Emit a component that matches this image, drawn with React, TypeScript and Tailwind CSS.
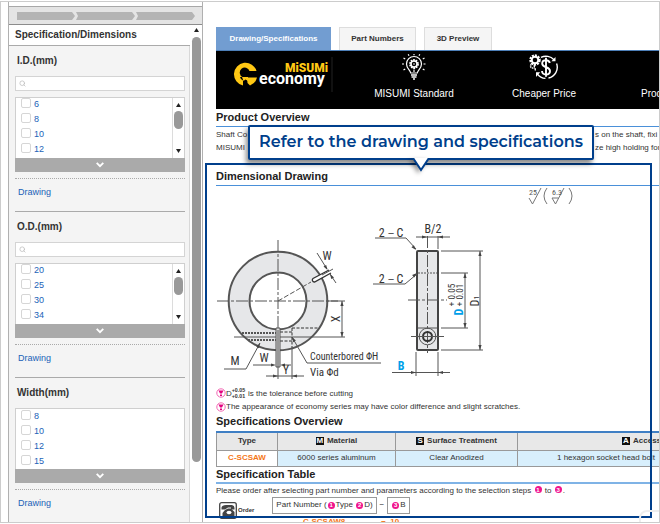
import React from "react";
import { Search } from "lucide-react";

type Filter = { id: string; title: string; values: string[]; searchable: boolean };

const filters: Filter[] = [
  { id: "inner", title: "I.D.(mm)", values: ["6", "8", "10", "12"], searchable: true },
  { id: "outer", title: "O.D.(mm)", values: ["20", "25", "30", "34"], searchable: true },
  { id: "width", title: "Width(mm)", values: ["8", "10", "12", "15"], searchable: false },
];

function StepBar() {
  return (
    <div className="flex h-[18px] items-center justify-center border-b border-[#8c8c8c] bg-[#e4e4e4]">
      <svg width="178" height="8" viewBox="0 0 178 8" fill="#b4b4b4">
        <path d="M0 0H55L58 4L55 8H0Z" />
        <path d="M59 0H115L118 4L115 8H59L61 4Z" />
        <path d="M119 0H175L178 4L175 8H119L121 4Z" />
      </svg>
    </div>
  );
}

function Triangle({ up = false }: { up?: boolean }) {
  return (
    <svg width="5" height="4" viewBox="0 0 5 4" fill="#222">
      <path d={up ? "M0 4L2.5 0L5 4Z" : "M0 0L2.5 4L5 0Z"} />
    </svg>
  );
}

function FilterGroup({ filter }: { filter: Filter }) {
  return (
    <section className="border-b border-[#aaa] last:border-b-0">
      <h3 className="flex h-[30px] items-center pb-[2px] pl-[2px] text-[10px] font-bold text-[#333]">{filter.title}</h3>
      {filter.searchable && (
        <label className="mb-[6px] flex h-[15px] items-center border border-[#d4d4d4] bg-white pl-[3px]">
          <Search className="size-[7px] shrink-0 text-[#bbb]" strokeWidth={2.5} />
          <input aria-label={filter.title} className="h-full w-full min-w-0 px-1 text-[10px] outline-none" />
        </label>
      )}
      <div className="flex h-[61px] overflow-hidden border border-b-0 border-[#cfcfcf] bg-white">
        <ul className={filter.searchable ? "flex-1" : "flex-1 pt-px"}>
          {filter.values.map((v) => (
            <li key={v} className="h-[15px] pl-[5px]">
              <label className="flex items-start gap-[3px] text-[9px] leading-[12px] text-[#2262b8]">
                <input type="checkbox" className="size-[10px] shrink-0 appearance-none rounded-[2px] border border-[#d6d6d6] bg-white" />
                {v}
              </label>
            </li>
          ))}
        </ul>
        {filter.searchable && (
          <div className="flex w-3 flex-col items-center border-l border-[#dcdcdc] py-[5px]">
            <Triangle up />
            <span className="mt-1 h-[18px] w-[9px] rounded-full bg-[#999]" />
            <span className="mt-auto flex"><Triangle /></span>
          </div>
        )}
      </div>
      <button aria-label={"Show more " + filter.title} className="flex h-[14px] w-full items-center justify-center bg-[#aaa]">
        <svg width="8" height="6" viewBox="0 0 8 6" fill="none" stroke="#fff" strokeWidth="1.8">
          <path d="M0.7 0.8L4 4.2L7.3 0.8" />
        </svg>
      </button>
      <div className="mt-[6px] h-[33px] border-t border-dotted border-[#aaa] pt-[7px] pl-[3px]">
        <a href="#drawing" className="block text-[9px] leading-[12px] text-[#2262b8]">Drawing</a>
      </div>
    </section>
  );
}

function Sidebar() {
  return (
    <aside className="ml-[7px] flex w-[195px] shrink-0 flex-col border-x border-[#b0b0b0] pt-1">
      <div className="border-t border-[#a8a8a8]"><StepBar /></div>
      <div className="flex min-h-0 flex-1">
        <div className="flex flex-1 flex-col">
          <h2 className="flex h-[21px] items-center border-b border-[#aaa] pb-[2px] pl-[6px] text-[10px] font-bold text-[#333]">
            Specification/Dimensions
          </h2>
          <div className="flex-1 border-r border-[#d8d8d8] bg-[#f4f4f4] pr-1 pl-[6px]">
            {filters.map((f) => <FilterGroup key={f.id} filter={f} />)}
          </div>
        </div>
        <div className="flex w-3 flex-col items-center pt-[3px]">
          <Triangle up />
          <span className="mt-[5px] h-[425px] w-[9px] rounded-full bg-[#999]" />
        </div>
      </div>
    </aside>
  );
}

function EconomyLogo() {
  return (
    <svg width="118" height="58" viewBox="216 51 118 58">
      {/* ring with an open right side, closed below by the hand */}
      <path d="M256.500 71A11.500 11.500 0 1 0 243 85.500V80.500Q240.500 79.500 240 77H242.500A5 5 0 1 1 249.500 71Z" fill="#ffc814" />
      <path d="M247 77.500H257Q255.500 83.500 250 85.500L247.500 83Z" fill="#ffc814" />
      <path d="M242 77H248V81L245.500 79.500L243.500 81Z" fill="#ffc814" />
      <text x="285" y="72" fill="#ffc814" fontSize="12" fontWeight="900" fontFamily="Roboto, sans-serif">MiSUMi</text>
      <text x="259" y="84" fill="#fff" fontSize="16" fontWeight="700" fontFamily="Roboto, sans-serif">economy</text>
      <path d="M332 57V92" stroke="#222" />
    </svg>
  );
}

function BulbIcon() {
  return (
    <svg width="26" height="26" viewBox="0 0 26 26" fill="none" stroke="#fff" strokeWidth="1.2">
      <path d="M9.7 19C9.5 16.5 5.5 14.5 5.5 10A7.5 7.5 0 0 1 20.5 10C20.5 14.5 16.5 16.5 16.3 19Z" />
      <path d="M10 21H16M10.5 23H15.5M12 25H14" strokeWidth="1.3" />
      <circle cx="13" cy="10" r="4" strokeWidth="1.8" strokeDasharray="1.7 .8" />
      <circle cx="13" cy="10" r="3" strokeWidth="1.5" />
      <circle cx="13" cy="10" r=".8" fill="#fff" stroke="none" />
      <path d="M13 13.5V18M1 10H3.5M22.5 10H25M2.5 4L4.7 5.3M23.5 4L21.3 5.3M2.5 16L4.7 14.7M23.5 16L21.3 14.7M7.2 .3L8 1.8M18.8 .3L18 1.8M13 0V1.3" strokeDasharray="2 .6" />
    </svg>
  );
}

function PriceIcon() {
  return (
    <svg width="30" height="26" viewBox="0 0 30 26" fill="none" stroke="#fff">
      <path d="M12 3.4A11 11 0 0 1 25 5.8M27.6 9.5A11 11 0 0 1 19.5 24M16.5 24.4A11 11 0 0 1 8.3 19.8M6.4 16.5L6 14" strokeWidth="1.4" />
      <path d="M26.5 3V7.2H22.4ZM7 23V18.2H11.2Z" fill="#fff" stroke="none" />
      <circle cx="6" cy="6" r="4.6" strokeWidth="2.2" strokeDasharray="2 1" />
      <circle cx="6" cy="6" r="3.3" strokeWidth="2" />
      <circle cx="3.5" cy="12" r="2" strokeWidth="1.5" strokeDasharray="1.4 .6" />
      <path d="M20.8 9C20.4 7 19 6.2 17 6.2C14.8 6.2 13.2 7.5 13.2 9.5C13.2 14.5 21 12 21 17C21 19.2 19.3 20.5 17 20.5C14.8 20.5 13.2 19.3 13 17M17 3.8V22.8" strokeWidth="1.9" />
    </svg>
  );
}

function Arrow({ x, y, a }: { x: number; y: number; a: number }) {
  return <path d="M0 0L-5 -1.6V1.6Z" fill="#444" stroke="none" transform={`translate(${x} ${y}) rotate(${a})`} />;
}

function DimensionalDrawing() {
  return (
    <svg width="444" height="200" viewBox="216 186 444 200" fill="none" stroke="#555" strokeWidth="1"
      className="block font-['Roboto_Condensed',Roboto,sans-serif] text-[12px]">
      {/* surface finish marks */}
      <g stroke="#777">
        <path d="M529 198L532.5 204L541 188M547 188Q541 196 547 204M552 198L555.5 204L564 188M552 198H558.5M569 188Q575 196 569 204" />
        <g fill="#555" stroke="none" fontSize="8"><text x="529" y="195">25</text><text x="552" y="195">6.3</text></g>
      </g>
      {/* ring */}
      <circle cx="278" cy="301" r="39" stroke="#e6e7e9" strokeWidth="20" />
      <circle cx="278" cy="301" r="49.3" stroke="#555" strokeWidth="2" />
      <circle cx="278" cy="301" r="28.5" stroke="#555" strokeWidth="2" />
      <path d="M278 240V330M217 301H338" strokeDasharray="12 2 3 2" />
      <path d="M278 301L311 282" strokeDasharray="5 2" />
      <path d="M329 270L313 278.5A2 2 0 0 0 314.5 282L331 273" fill="#fff" stroke="#333" strokeWidth="1.3" />
      <path d="M317 253L327 269M330 274L336 283M322 275L333 269" />
      <Arrow x={327.5} y={270} a={58} /><Arrow x={330} y={274} a={238} />
      <path d="M326 301H345M234 337H345M342 301V337" />
      <Arrow x={342} y={301} a={-90} /><Arrow x={342} y={337} a={90} />
      <path d="M242 333H276M248 340H276" strokeWidth="2" strokeDasharray="2 1" />
      <path d="M280 332H292M280 341H292M292 328H319M292 328V348" stroke="#333" strokeDasharray="3 1.5" />
      <path d="M276 328H280V367H276Z" fill="#ddd" />
      <path d="M278 330V379M292 348V379M266 376H304M253 365H271M283 365H291" />
      <Arrow x={276} y={365} a={0} /><Arrow x={280} y={365} a={180} />
      <Arrow x={278} y={376} a={0} /><Arrow x={292} y={376} a={180} />
      <path d="M224 369H246L260 343M381 363H307L292 337" />
      <Arrow x={260} y={343} a={-61} /><Arrow x={292} y={337} a={-120} />
      {/* side view */}
      <rect x="417" y="251" width="21" height="99" rx="1" fill="#e6e7e9" stroke="#444" strokeWidth="2" />
      <path d="M418 273H437" strokeDasharray="2 1" /><path d="M418 328H437" />
      <path d="M427.5 236V353M408 300H447" strokeDasharray="12 2 3 2" />
      <circle cx="427.5" cy="336.500" r="8.3" /><circle cx="427.5" cy="336.500" r="4.5" stroke="#333" strokeWidth="2" />
      <path d="M411 336.500H444M438 236V249M416 237H450" />
      <Arrow x={427} y={237} a={0} /><Arrow x={438} y={237} a={180} />
      <path d="M375 238H406L416 249M373 284H405L417 274" />
      <Arrow x={416} y={250} a={48} /><Arrow x={417} y={273} a={-40} />
      <path d="M441 251H483M441 273H468M441 328H468M441 350H483M465 273V328M480 251V350" />
      <Arrow x={465} y={273} a={-90} /><Arrow x={465} y={328} a={90} />
      <Arrow x={480} y={251} a={-90} /><Arrow x={480} y={350} a={90} />
      <path d="M416 352V376M438 352V376M392 372.500H450" />
      <Arrow x={416} y={372.5} a={0} /><Arrow x={438} y={372.5} a={180} />
      {/* labels */}
      <g fill="#333" stroke="none" textAnchor="middle">
        <text x="327" y="260">W</text>
        <text transform="translate(340 319) rotate(-90)">X</text>
        <text x="235" y="365">M</text>
        <text x="264" y="362">W</text>
        <text x="286" y="374">Y</text>
        <text x="310" y="360" textAnchor="start" fontSize="10">Counterbored ΦH</text>
        <text x="310" y="376" textAnchor="start" fontSize="11">Via Φd</text>
        <text x="433" y="233">B/2</text>
        <text x="391" y="237">2－C</text>
        <text x="391" y="283">2－C</text>
        <text transform="translate(479 301) rotate(-90)">D<tspan fontSize="8">1</tspan></text>
        <text transform="translate(455 295) rotate(-90)" fontSize="9">+ 0.05</text>
        <text transform="translate(463 295) rotate(-90)" fontSize="9">+ 0.01</text>
        <text transform="translate(463 312) rotate(-90)" fontWeight="700" fill="#00a0e9">D</text>
        <text x="401" y="370" fontWeight="700" fill="#00a0e9">B</text>
      </g>
    </svg>
  );
}

function NoteIcon() {
  return (
    <svg width="10" height="10" viewBox="0 0 10 10" className="shrink-0">
      <circle cx="5" cy="5" r="4.2" fill="#fff" stroke="#f268b4" />
      <path d="M2.5 2.5H7.500L6 5.500H4ZM4 6.500H6V8H4Z" fill="#e4007f" />
    </svg>
  );
}

function Num({ n }: { n: number }) {
  return <b className="mx-px inline-flex size-[7px] items-center justify-center rounded-full bg-[#f0148c] align-[1px] text-[6px] leading-none text-white">{n}</b>;
}

function Badge({ c }: { c: string }) {
  return <span className="mr-[3px] inline-block size-2 bg-[#111] text-center text-[8px] leading-[8px] text-white">{c}</span>;
}

function SectionTitle({ children }: { children: React.ReactNode }) {
  return <h2 className="flex h-[18px] items-center border-b border-[#4a90d9] text-[11px] font-bold text-[#222]">{children}</h2>;
}

export default function App() {
  const th = "border border-[#999] p-0 font-bold";
  const td = "border border-[#999] p-0";
  return (
    <div className="h-screen bg-white py-px font-['Liberation_Sans',Arial,sans-serif] text-[#333]">
      <div className="relative flex h-full overflow-hidden border border-[#ccc]">
        <Sidebar />
        <main className="min-w-0 flex-1 overflow-hidden pt-[25px] pl-[13px] text-[8px] whitespace-nowrap">
          <nav className="flex gap-2 border-b border-[#4d7fb8] text-[8px] font-bold">
            <button className="h-[23px] w-[115px] bg-[#729dd1] text-white">Drawing/Specifications</button>
            <button className="h-[23px] w-[77px] border border-b-0 border-[#ddd] bg-[#f5f5f5]">Part Numbers</button>
            <button className="h-[23px] w-[68px] border border-b-0 border-[#ddd] bg-[#f5f5f5]">3D Preview</button>
          </nav>
          <div className="flex h-[58px] bg-black text-[10px] text-white">
            <div className="w-[133px] shrink-0"><EconomyLogo /></div>
            <div className="flex w-[130px] shrink-0 flex-col items-center gap-2 pt-[3px] leading-[12px]"><BulbIcon />MISUMI Standard</div>
            <div className="flex w-[130px] shrink-0 flex-col items-center gap-2 pt-[3px] leading-[12px]"><PriceIcon />Cheaper Price</div>
            <div className="shrink-0 pt-[37px] pl-8 leading-[12px]">Prod</div>
          </div>
          <SectionTitle>Product Overview</SectionTitle>
          <div className="h-[41px] pt-px leading-[13px]">
            <p className="flex"><span className="w-[379px] shrink-0">Shaft Co</span>s on the shaft, fixi</p>
            <p className="flex"><span className="w-[379px] shrink-0">MISUMI</span>ze high holding for</p>
          </div>
          <SectionTitle>Dimensional Drawing</SectionTitle>
          <DimensionalDrawing />
          <div className="leading-[13px]">
            <p className="flex h-[14px] items-center"><NoteIcon />D
              <span className="mr-[3px] flex flex-col text-[7px] leading-[6px] font-bold"><sup className="static leading-[6px]">+0.05</sup><sub className="static leading-[6px]">+0.01</sub></span>
              is the tolerance before cutting</p>
            <p className="flex h-[13px] items-center"><NoteIcon />The appearance of economy series may have color difference and slight scratches.</p>
          </div>
          <h2 className="flex h-[18px] items-center pb-px text-[11px] font-bold text-[#222]">Specifications Overview</h2>
          <table className="w-[700px] table-fixed border-collapse border-t-2 border-[#3f7fc4] text-center">
            <thead>
              <tr className="h-[18px] bg-[#e8e8e8]">
                <th className={th + " w-[61px]"}>Type</th>
                <th className={th + " w-[118px]"}><Badge c="M" />Material</th>
                <th className={th + " w-[122px]"}><Badge c="S" />Surface Treatment</th>
                <th className={th + " pl-[104px] text-left"}><Badge c="A" />Access</th>
              </tr>
            </thead>
            <tbody>
              <tr className="h-[16px] bg-[#d8effc]">
                <td className={td + " bg-white font-bold text-[#f57716]"}>C-SCSAW</td>
                <td className={td}>6000 series aluminum</td>
                <td className={td}>Clear Anodized</td>
                <td className={td + " pl-[39px] text-left"}>1 hexagon socket head bolt</td>
              </tr>
            </tbody>
          </table>
          <h2 className="flex h-[17px] items-center border-b-2 border-[#7fb3e6] text-[11px] font-bold text-[#222]">Specification Table</h2>
          <p className="h-[13px] leading-[13px]">Please order after selecting part number and parameters according to the selection steps <Num n={1} /> to <Num n={3} />.</p>
          <div className="flex h-[17px] items-center pl-[3px]">
            <svg width="18" height="17" viewBox="0 0 18 17" className="mt-[10px] shrink-0">
              <rect x=".7" y=".7" width="16.600" height="15.600" rx="2" fill="#fff" stroke="#444" strokeWidth="1.300" />
              <path d="M2.500 7.500V5.500Q3 3 7 3H13Q15.500 3.500 15.500 6V7.500H12V5.500H9L6 7.500Z" fill="#444" />
              <path d="M6 8L9 6.500H12L15.500 10V14H3.500V11Z" fill="#444" />
              <ellipse cx="10" cy="10.500" rx="2.500" ry="1.800" fill="#fff" />
            </svg>
            <b className="mt-[10px] ml-px text-[6px]">Order</b>
            <span className="ml-[18px] flex h-[17px] items-center border border-[#999] px-[3px]">Part Number (<Num n={1} />Type&nbsp;<Num n={2} />D)</span>
            <span className="px-[3px]">−</span>
            <span className="flex h-[17px] items-center border border-[#999] px-[3px]"><Num n={3} />B</span>
          </div>
          <p className="flex gap-9 pt-[2px] pl-[87px] font-bold text-[#f57716]"><span>C-SCSAW8</span><span>−&nbsp; 10</span></p>
        </main>

        {/* highlighted area and its callout */}
        <div className="pointer-events-none absolute top-[161px] right-[7px] bottom-[4px] left-[204px] border-2 border-[#003f8c]" />
        <div className="absolute -right-3 -bottom-5 size-8 rounded-lg border-2 border-[#eee]" />
        <div className="absolute top-[123px] left-[247px] flex h-[35px] w-[346px] items-center justify-center rounded-[2px] border-2 border-[#003f8c] bg-white pb-[2px] font-['Montserrat','Inter',sans-serif] text-[16px] font-semibold whitespace-nowrap text-[#003f8c] shadow-[-2px_4px_5px_rgba(0,0,0,0.45)]">
          Refer to the drawing and specifications
          <svg width="18" height="14" viewBox="0 0 18 14" className="absolute top-[31px] left-[162px] drop-shadow-[-3px_2px_2px_rgba(0,0,0,0.35)]">
            <path d="M1 0L9 12L17 0" fill="#fff" stroke="#003f8c" strokeWidth="2" />
          </svg>
        </div>
      </div>
    </div>
  );
}
